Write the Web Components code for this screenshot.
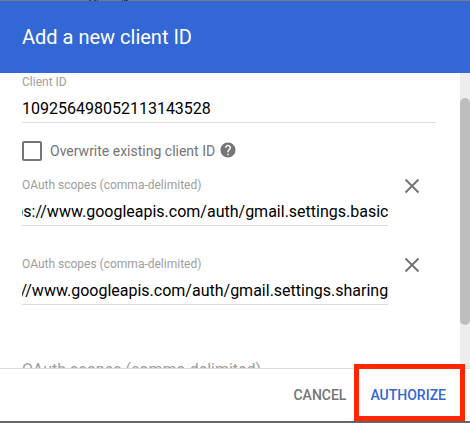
<!DOCTYPE html>
<html lang="en">
<head>
<meta charset="utf-8">
<title>Add a new client ID</title>
<style>
  body { margin: 0; font-family: Roboto, "Liberation Sans", sans-serif; color: #000; }
</style>
</head>
<body>
<client-dialog>
  <span slot="title">Add a new client ID</span>
  <text-field label="Client ID" value="109256498052113143528"></text-field>
  <check-option label="Overwrite existing client ID"></check-option>
  <scope-row value="https://www.googleapis.com/auth/gmail.settings.basic"></scope-row>
  <scope-row value="https://www.googleapis.com/auth/gmail.settings.sharing"></scope-row>
  <scope-row></scope-row>
  <dialog-button slot="actions">CANCEL</dialog-button>
  <dialog-button slot="actions" primary highlighted>AUTHORIZE</dialog-button>
</client-dialog>

<template id="client-dialog">
  <style>
    :host { display: flex; flex-direction: column; height: 100vh; overflow: hidden; background: #fff; }
    .backdrop { flex: none; display: block; width: 100%; height: 1px; background: #7a7a7a; }
    .backdrop.bottom { height: 2px; background: #666; }
    header { flex: none; display: flex; align-items: center; height: 72px; padding: 0 22px; background: #3367d6; color: #fff; }
    h1 { margin: 0; font-size: 20px; line-height: 24px; font-weight: 400; }
    main { flex: 1; min-height: 0; display: flex; }
    .content { flex: 1; min-width: 0; overflow: hidden; display: flex; flex-direction: column; padding: 1px 24px 0 22px; }
    ::slotted(check-option) { margin: 18px 0 16px; }
    ::slotted(scope-row) { margin-bottom: 30px; }
    footer { flex: none; display: flex; align-items: center; justify-content: flex-end; gap: 8px; height: 52px; padding-right: 16px; border-top: 1px solid #dcdcdc; }
  </style>
  <svg class="backdrop" aria-hidden="true"><path d="M89 .5h2M94 .5h2M97 .5h1M122 .5h1M124 .5h4" stroke="#3c3c3c"/></svg>
  <header><h1><slot name="title"></slot></h1></header>
  <main>
    <div class="content"><slot></slot></div>
    <scroll-track></scroll-track>
  </main>
  <footer><slot name="actions"></slot></footer>
  <div class="backdrop bottom"></div>
</template>

<template id="scroll-track">
  <style>
    :host { flex: none; display: grid; grid-template-rows: 25fr 227fr 43fr; width: 10px; background: #ededed; }
    div { grid-row: 2; border-radius: 5px; background: #bdbdbd; }
  </style>
  <div></div>
</template>

<template id="text-field">
  <style>
    :host { display: flex; flex-direction: column; gap: 7px; flex: none; min-width: 0; }
    label { height: 16px; font-size: 12px; line-height: 16px; color: #9e9e9e; }
    input { box-sizing: border-box; width: 100%; height: 26px; margin: 0; padding: 0 0 3px; border: 0; border-bottom: 1px solid #dcdcdc; border-radius: 0; outline: 0; background: none; font: 16px/22px Roboto, "Liberation Sans", sans-serif; color: #000; }
    input::placeholder { color: #9e9e9e; opacity: 1; }
  </style>
  <label for="field"></label>
  <input id="field" type="text" spellcheck="false">
</template>

<template id="scope-row">
  <style>
    :host { flex: none; display: flex; align-items: flex-start; gap: 15px; }
    text-field { flex: 1; }
    button { flex: none; display: flex; width: 18px; height: 18px; margin: 0 15px 0 0; padding: 0; border: 0; background: none; color: #757575; }
    :host(:not([value])) button { visibility: hidden; }
  </style>
  <text-field label="OAuth scopes (comma-delimited)"></text-field>
  <button type="button" aria-label="Remove scope">
    <svg width="18" height="18" viewBox="0 0 18 18" fill="none" stroke="currentColor" stroke-width="2"><path d="M2.5 2.5l13 13M15.5 2.5l-13 13"/></svg>
  </button>
</template>

<template id="check-option">
  <style>
    :host { flex: none; display: flex; align-items: center; height: 20px; font-size: 14px; line-height: 20px; color: #757575; }
    input { appearance: none; box-sizing: border-box; flex: none; width: 20px; height: 20px; margin: 0 8px 0 0; border: 2px solid #757575; border-radius: 2px; background: #fff; }
    button { display: flex; align-self: flex-start; width: 18px; height: 18px; margin: 0 0 0 4px; padding: 0; border: 0; background: none; color: #757575; }
  </style>
  <input id="check" type="checkbox"><label for="check"></label>
  <button type="button" aria-label="Help">
    <svg width="18" height="18" viewBox="0 0 24 24" fill="currentColor"><path d="M12 2C6.48 2 2 6.48 2 12s4.480 10 10 10 10-4.480 10-10S17.520 2 12 2zm1 17h-2v-2h2v2zm2.070-7.750l-.9.920C13.450 12.900 13 13.500 13 15h-2v-.5c0-1.100.45-2.100 1.170-2.830l1.240-1.260c.37-.36.59-.86.59-1.410 0-1.100-.9-2-2-2s-2 .9-2 2H8c0-2.210 1.790-4 4-4s4 1.790 4 4c0 .88-.36 1.680-.93 2.250z"/></svg>
  </button>
</template>

<template id="dialog-button">
  <style>
    :host { position: relative; display: block; }
    button { display: block; height: 36px; margin: 0; padding: 0 8px; border: 0; background: none; font: 500 14px/36px Roboto, "Liberation Sans", sans-serif; color: #757575; }
    :host([primary]) button { color: #3367d6; }
    :host([highlighted])::after { content: ""; position: absolute; inset: -13px -11px -8px -8px; border: 5px solid #ff2600; pointer-events: none; }
  </style>
  <button type="button"><slot></slot></button>
</template>

<script>
  class TemplateElement extends HTMLElement {
    constructor() {
      super();
      const template = document.getElementById(this.localName);
      this.attachShadow({ mode: "open" }).append(template.content.cloneNode(true));
    }
  }
  class TextField extends TemplateElement {
    static observedAttributes = ["label", "value"];
    connectedCallback() { this.render(); }
    attributeChangedCallback() { this.render(); }
    render() {
      const input = this.shadowRoot.querySelector("input");
      const text = this.getAttribute("label") || "";
      const value = this.getAttribute("value") || "";
      // The label floats above a filled field and rests inside an empty one.
      this.shadowRoot.querySelector("label").textContent = value ? text : "";
      input.placeholder = value ? "" : text;
      input.setAttribute("aria-label", text);
      input.value = value;
      // Keep the end of a long URL in view.
      input.scrollLeft = input.scrollWidth;
      requestAnimationFrame(() => { input.scrollLeft = input.scrollWidth; });
    }
  }
  class ScopeRow extends TemplateElement {
    connectedCallback() {
      this.shadowRoot.querySelector("text-field").setAttribute("value", this.getAttribute("value") || "");
    }
  }
  class CheckOption extends TemplateElement {
    connectedCallback() {
      this.shadowRoot.querySelector("label").textContent = this.getAttribute("label");
    }
  }
  customElements.define("text-field", TextField);
  customElements.define("scope-row", ScopeRow);
  customElements.define("check-option", CheckOption);
  customElements.define("scroll-track", class extends TemplateElement {});
  customElements.define("dialog-button", class extends TemplateElement {});
  customElements.define("client-dialog", class extends TemplateElement {});
</script>
</body>
</html>
